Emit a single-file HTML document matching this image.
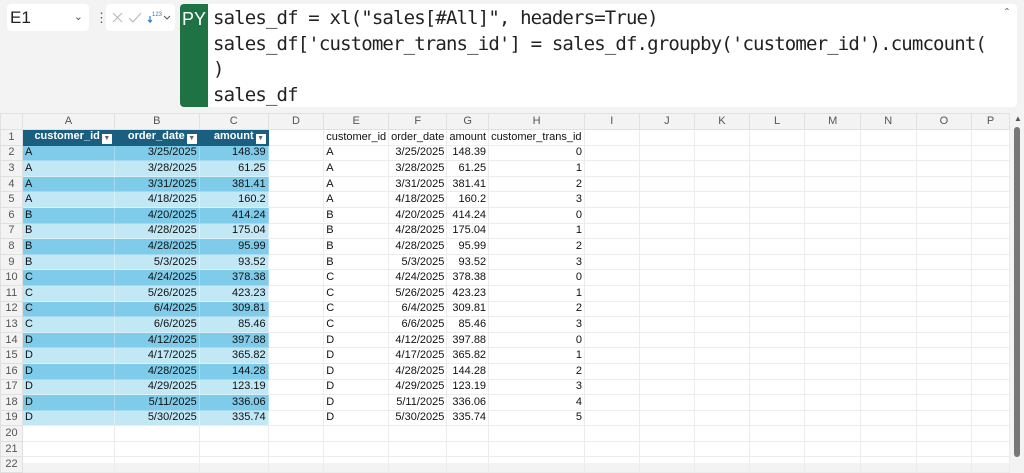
<!DOCTYPE html>
<html><head><style>
body{margin:0;width:1024px;height:463px;overflow:hidden;background:#f3f3f3;font-family:"Liberation Sans",sans-serif;position:relative}
.nb{position:absolute;left:7px;top:4px;width:82px;height:27px;background:#fff;border-radius:4px;font-size:17px;line-height:27px;padding-left:3px;box-sizing:border-box;color:#222}
.nb span{position:absolute;right:6px;top:0;font-size:11px;color:#555}
.dots{position:absolute;left:95px;top:10px;font-size:13px;color:#555}
.ic{position:absolute;left:106px;top:4px;width:69px;height:27px;background:#fff;border-radius:4px}
.fb{position:absolute;left:180px;top:4px;width:837px;height:103px;background:#fff;border-radius:4px;overflow:hidden}
.py{position:absolute;left:0;top:0;width:28px;height:103px;background:#1f7244;color:#fff;font-size:18px;text-align:center;line-height:30px}
.code{position:absolute;left:33px;top:2px;font-family:"DejaVu Sans Mono","Liberation Mono",monospace;font-size:19px;line-height:25.5px;color:#222;white-space:pre;letter-spacing:-0.85px}
.grid{position:absolute;left:0;top:113px;width:1010px;height:350px;background:#fff}
table{border-collapse:collapse;table-layout:fixed;position:absolute;left:0;top:0}
td{height:15.6px;padding:0 2px;border:1px solid #ececec;font-size:11px;white-space:nowrap;overflow:hidden;box-sizing:border-box;line-height:13px;color:#111}
tr.h td{height:16px;background:#f3f3f3;color:#555;text-align:center;border-color:#e0e0e0}
td.rh{background:#f3f3f3;color:#555;text-align:center;border-color:#e0e0e0}
.r{text-align:right}
.th{background:#1b5f80;color:#fff;font-weight:bold;text-align:right;border-color:#1b5f80}
.th i{display:inline-block;width:10px;height:10px;background:#fff;vertical-align:-1px;margin-left:2px;font-style:normal;color:#666;font-size:7px;line-height:10px;text-align:center}
.d{background:#7fcbea;border-color:#a6d9ef}
.l{background:#c2e7f5;border-color:#dcf0f8}
.sb{position:absolute;left:1011px;top:113px;width:13px;height:350px;background:#f3f3f3}
.sb div{position:absolute;left:3px;top:14px;width:6px;height:330px;background:#777;border-radius:3px}
</style></head><body>
<div class="nb">E1<span>&#8964;</span></div>
<div class="dots">&#8942;</div>
<div class="ic"><svg width="69" height="27"><path d="M7 9l9 9M16 9l-9 9" stroke="#bbb" stroke-width="1.2"/><path d="M23 14l4 4 8-9" stroke="#bbb" stroke-width="1.2" fill="none"/><path d="M44 12v6l-2-2M44 18l2-2" stroke="#2a7ad0" stroke-width="1.2" fill="none"/><text x="46" y="12" font-size="6" fill="#2a7ad0">123</text><path d="M58 12l3 3 3-3" stroke="#555" fill="none"/></svg></div>
<div class="fb"><div class="py">PY</div><div class="code">sales_df = xl("sales[#All]", headers=True)
sales_df['customer_trans_id'] = sales_df.groupby('customer_id').cumcount(
)
sales_df</div><div style="position:absolute;right:8px;top:2px;color:#555;font-size:12px">&#710;</div></div>
<div class="grid">
<table>
<colgroup><col style="width:22px"><col style="width:92px"><col style="width:85px"><col style="width:69px"><col style="width:56px"><col style="width:64px"><col style="width:57px"><col style="width:41px"><col style="width:96px"><col style="width:55px"><col style="width:56px"><col style="width:55px"><col style="width:56px"><col style="width:56px"><col style="width:56px"><col style="width:56px"><col style="width:38px"></colgroup>
<tr class="h"><td></td><td>A</td><td>B</td><td>C</td><td>D</td><td>E</td><td>F</td><td>G</td><td>H</td><td>I</td><td>J</td><td>K</td><td>L</td><td>M</td><td>N</td><td>O</td><td class="r">P</td></tr>
<tr><td class="rh">1</td><td class="th">customer_id<i>&#9660;</i></td><td class="th">order_date<i>&#9660;</i></td><td class="th">amount<i>&#9660;</i></td><td></td><td>customer_id</td><td>order_date</td><td>amount</td><td>customer_trans_id</td><td></td><td></td><td></td><td></td><td></td><td></td><td></td><td></td></tr>
<tr><td class="rh">2</td><td class="d">A</td><td class="d r">3/25/2025</td><td class="d r">148.39</td><td></td><td>A</td><td class="r">3/25/2025</td><td class="r">148.39</td><td class="r">0</td><td></td><td></td><td></td><td></td><td></td><td></td><td></td><td></td></tr>
<tr><td class="rh">3</td><td class="l">A</td><td class="l r">3/28/2025</td><td class="l r">61.25</td><td></td><td>A</td><td class="r">3/28/2025</td><td class="r">61.25</td><td class="r">1</td><td></td><td></td><td></td><td></td><td></td><td></td><td></td><td></td></tr>
<tr><td class="rh">4</td><td class="d">A</td><td class="d r">3/31/2025</td><td class="d r">381.41</td><td></td><td>A</td><td class="r">3/31/2025</td><td class="r">381.41</td><td class="r">2</td><td></td><td></td><td></td><td></td><td></td><td></td><td></td><td></td></tr>
<tr><td class="rh">5</td><td class="l">A</td><td class="l r">4/18/2025</td><td class="l r">160.2</td><td></td><td>A</td><td class="r">4/18/2025</td><td class="r">160.2</td><td class="r">3</td><td></td><td></td><td></td><td></td><td></td><td></td><td></td><td></td></tr>
<tr><td class="rh">6</td><td class="d">B</td><td class="d r">4/20/2025</td><td class="d r">414.24</td><td></td><td>B</td><td class="r">4/20/2025</td><td class="r">414.24</td><td class="r">0</td><td></td><td></td><td></td><td></td><td></td><td></td><td></td><td></td></tr>
<tr><td class="rh">7</td><td class="l">B</td><td class="l r">4/28/2025</td><td class="l r">175.04</td><td></td><td>B</td><td class="r">4/28/2025</td><td class="r">175.04</td><td class="r">1</td><td></td><td></td><td></td><td></td><td></td><td></td><td></td><td></td></tr>
<tr><td class="rh">8</td><td class="d">B</td><td class="d r">4/28/2025</td><td class="d r">95.99</td><td></td><td>B</td><td class="r">4/28/2025</td><td class="r">95.99</td><td class="r">2</td><td></td><td></td><td></td><td></td><td></td><td></td><td></td><td></td></tr>
<tr><td class="rh">9</td><td class="l">B</td><td class="l r">5/3/2025</td><td class="l r">93.52</td><td></td><td>B</td><td class="r">5/3/2025</td><td class="r">93.52</td><td class="r">3</td><td></td><td></td><td></td><td></td><td></td><td></td><td></td><td></td></tr>
<tr><td class="rh">10</td><td class="d">C</td><td class="d r">4/24/2025</td><td class="d r">378.38</td><td></td><td>C</td><td class="r">4/24/2025</td><td class="r">378.38</td><td class="r">0</td><td></td><td></td><td></td><td></td><td></td><td></td><td></td><td></td></tr>
<tr><td class="rh">11</td><td class="l">C</td><td class="l r">5/26/2025</td><td class="l r">423.23</td><td></td><td>C</td><td class="r">5/26/2025</td><td class="r">423.23</td><td class="r">1</td><td></td><td></td><td></td><td></td><td></td><td></td><td></td><td></td></tr>
<tr><td class="rh">12</td><td class="d">C</td><td class="d r">6/4/2025</td><td class="d r">309.81</td><td></td><td>C</td><td class="r">6/4/2025</td><td class="r">309.81</td><td class="r">2</td><td></td><td></td><td></td><td></td><td></td><td></td><td></td><td></td></tr>
<tr><td class="rh">13</td><td class="l">C</td><td class="l r">6/6/2025</td><td class="l r">85.46</td><td></td><td>C</td><td class="r">6/6/2025</td><td class="r">85.46</td><td class="r">3</td><td></td><td></td><td></td><td></td><td></td><td></td><td></td><td></td></tr>
<tr><td class="rh">14</td><td class="d">D</td><td class="d r">4/12/2025</td><td class="d r">397.88</td><td></td><td>D</td><td class="r">4/12/2025</td><td class="r">397.88</td><td class="r">0</td><td></td><td></td><td></td><td></td><td></td><td></td><td></td><td></td></tr>
<tr><td class="rh">15</td><td class="l">D</td><td class="l r">4/17/2025</td><td class="l r">365.82</td><td></td><td>D</td><td class="r">4/17/2025</td><td class="r">365.82</td><td class="r">1</td><td></td><td></td><td></td><td></td><td></td><td></td><td></td><td></td></tr>
<tr><td class="rh">16</td><td class="d">D</td><td class="d r">4/28/2025</td><td class="d r">144.28</td><td></td><td>D</td><td class="r">4/28/2025</td><td class="r">144.28</td><td class="r">2</td><td></td><td></td><td></td><td></td><td></td><td></td><td></td><td></td></tr>
<tr><td class="rh">17</td><td class="l">D</td><td class="l r">4/29/2025</td><td class="l r">123.19</td><td></td><td>D</td><td class="r">4/29/2025</td><td class="r">123.19</td><td class="r">3</td><td></td><td></td><td></td><td></td><td></td><td></td><td></td><td></td></tr>
<tr><td class="rh">18</td><td class="d">D</td><td class="d r">5/11/2025</td><td class="d r">336.06</td><td></td><td>D</td><td class="r">5/11/2025</td><td class="r">336.06</td><td class="r">4</td><td></td><td></td><td></td><td></td><td></td><td></td><td></td><td></td></tr>
<tr><td class="rh">19</td><td class="l">D</td><td class="l r">5/30/2025</td><td class="l r">335.74</td><td></td><td>D</td><td class="r">5/30/2025</td><td class="r">335.74</td><td class="r">5</td><td></td><td></td><td></td><td></td><td></td><td></td><td></td><td></td></tr>
<tr><td class="rh">20</td><td></td><td></td><td></td><td></td><td></td><td></td><td></td><td></td><td></td><td></td><td></td><td></td><td></td><td></td><td></td><td></td></tr>
<tr><td class="rh">21</td><td></td><td></td><td></td><td></td><td></td><td></td><td></td><td></td><td></td><td></td><td></td><td></td><td></td><td></td><td></td><td></td></tr>
<tr><td class="rh">22</td><td></td><td></td><td></td><td></td><td></td><td></td><td></td><td></td><td></td><td></td><td></td><td></td><td></td><td></td><td></td><td></td></tr>
</table>
</div>
<div class="sb"><span style="position:absolute;left:3px;top:1px;font-size:8px;color:#555">&#9650;</span><div></div></div>
</body></html>
